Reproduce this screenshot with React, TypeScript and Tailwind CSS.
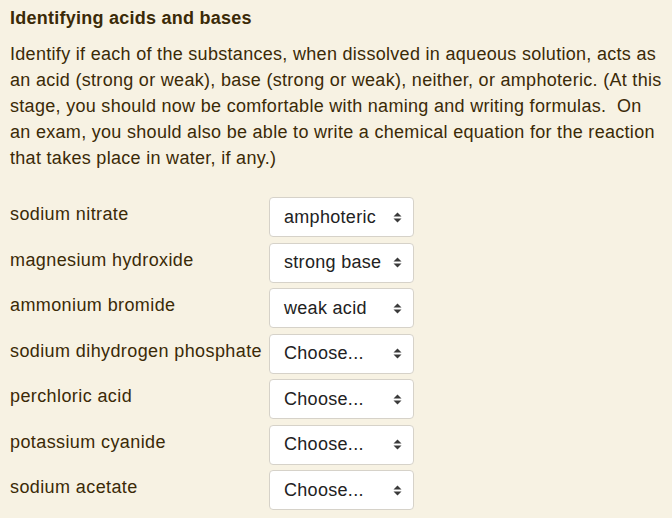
import React from 'react'

const rows: { name: string; value: string }[] = [
    { name: 'sodium nitrate', value: 'amphoteric' },
    { name: 'magnesium hydroxide', value: 'strong base' },
    { name: 'ammonium bromide', value: 'weak acid' },
    { name: 'sodium dihydrogen phosphate', value: 'Choose...' },
    { name: 'perchloric acid', value: 'Choose...' },
    { name: 'potassium cyanide', value: 'Choose...' },
    { name: 'sodium acetate', value: 'Choose...' },
]

const lines = [
    'Identify if each of the substances, when dissolved in aqueous solution, acts as',
    'an acid (strong or weak), base (strong or weak), neither, or amphoteric. (At this',
    'stage, you should now be comfortable with naming and writing formulas.\u00a0 On',
    'an exam, you should also be able to write a chemical equation for the reaction',
    'that takes place in water, if any.)',
]

function Arrows() {
    return (
        <svg width="9" height="13" viewBox="0 0 9 13" className="shrink-0">
            <path d="M4.5 1.5L8.5 5.5H0.5z" fill="#3a3a3a" />
            <path d="M4.5 11.5L8.5 7.5H0.5z" fill="#3a3a3a" />
        </svg>
    )
}

export default function App() {
    return (
        <div className="h-[518px] overflow-hidden bg-[#f7f2e3] text-[#3b2a07] px-[10px] pt-[6px]" style={{ fontFamily: '"Liberation Sans", Arial, sans-serif' }}>
            <h2 className="text-[18px] font-bold leading-[24px] tracking-[0.25px]">Identifying acids and bases</h2>
            <p className="mt-[11px] mr-[-10px] text-[18px] leading-[26px] tracking-[0.3px]">
                {lines.map(l => (
                    <span key={l} className="block whitespace-nowrap">{l}</span>
                ))}
            </p>

            <div className="mt-[26px] grid grid-cols-[259px_145px] gap-y-[5.5px]">
                {rows.map(r => (
                    <React.Fragment key={r.name}>
                        <div className="text-[18px] leading-[22px] pt-[6px] tracking-[0.4px] whitespace-nowrap">{r.name}</div>
                        <div className="h-[40px] bg-white border border-[#d6d2c9] rounded-[4px] flex items-center justify-between pl-[14px] pr-[11px] text-[18px] tracking-[0.3px] text-[#222]">
                            <span>{r.value}</span>
                            <Arrows />
                        </div>
                    </React.Fragment>
                ))}
            </div>
        </div>
    )
}
